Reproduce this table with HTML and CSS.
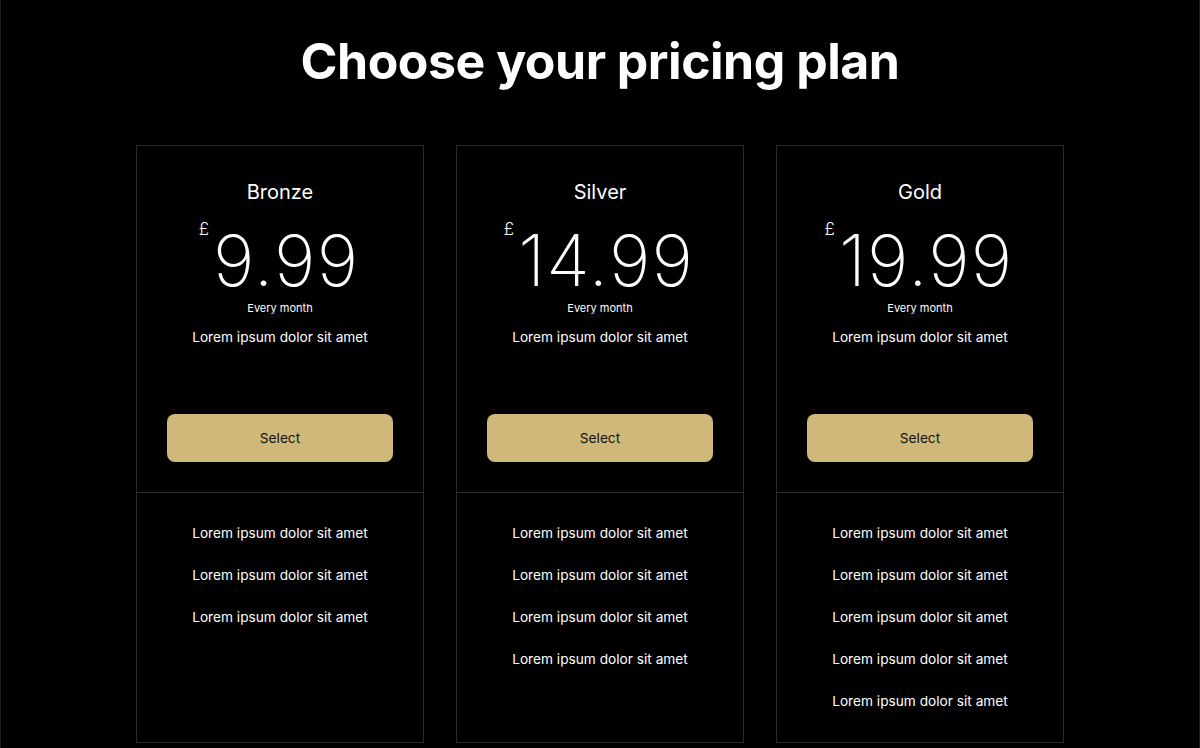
FILE: index.html
```html
<!DOCTYPE html>
<html>
<head>
<meta charset="utf-8">
<link rel="stylesheet" href="styles.css">
</head>
<body>
<main class="page">
  <h1 class="title">Choose your pricing plan</h1>
  <section class="plans">
    <article class="plan">
      <div class="plan-top">
        <h2 class="plan-name">Bronze</h2>
        <div class="price"><span class="currency">£</span><span class="amount">9.99</span></div>
        <div class="period">Every month</div>
        <p class="desc">Lorem ipsum dolor sit amet</p>
        <button class="select">Select</button>
      </div>
      <ul class="features">
        <li>Lorem ipsum dolor sit amet</li>
        <li>Lorem ipsum dolor sit amet</li>
        <li>Lorem ipsum dolor sit amet</li>
      </ul>
    </article>
    <article class="plan">
      <div class="plan-top">
        <h2 class="plan-name">Silver</h2>
        <div class="price"><span class="currency">£</span><span class="amount">14.99</span></div>
        <div class="period">Every month</div>
        <p class="desc">Lorem ipsum dolor sit amet</p>
        <button class="select">Select</button>
      </div>
      <ul class="features">
        <li>Lorem ipsum dolor sit amet</li>
        <li>Lorem ipsum dolor sit amet</li>
        <li>Lorem ipsum dolor sit amet</li>
        <li>Lorem ipsum dolor sit amet</li>
      </ul>
    </article>
    <article class="plan">
      <div class="plan-top">
        <h2 class="plan-name">Gold</h2>
        <div class="price"><span class="currency">£</span><span class="amount">19.99</span></div>
        <div class="period">Every month</div>
        <p class="desc">Lorem ipsum dolor sit amet</p>
        <button class="select">Select</button>
      </div>
      <ul class="features">
        <li>Lorem ipsum dolor sit amet</li>
        <li>Lorem ipsum dolor sit amet</li>
        <li>Lorem ipsum dolor sit amet</li>
        <li>Lorem ipsum dolor sit amet</li>
        <li>Lorem ipsum dolor sit amet</li>
      </ul>
    </article>
  </section>
</main>
</body>
</html>
```

FILE: styles.css
```css
html, body {
  margin: 0;
  padding: 0;
  background: #000;
  height: 100%;
  overflow: hidden;
}
body {
  font-family: Inter, "Noto Sans", sans-serif;
  color: #fff;
}
.page {
  height: 748px;
  border-left: 1px solid #1c1c1c;
  border-right: 1px solid #1c1c1c;
  box-sizing: border-box;
  display: flex;
  flex-direction: column;
  align-items: center;
}
.title {
  margin: 29px 0 0;
  font-size: 50px;
  font-weight: 700;
  line-height: 64px;
  letter-spacing: -0.5px;
}
.plans {
  margin-top: 52px;
  display: flex;
  gap: 32px;
}
.plan {
  width: 288px;
  height: 598px;
  box-sizing: border-box;
  border: 1px solid #2b2a22;
  display: flex;
  flex-direction: column;
}
.plan-top {
  height: 347px;
  box-sizing: border-box;
  border-bottom: 1px solid #2b2a22;
  display: flex;
  flex-direction: column;
  align-items: center;
  padding: 32px 30px 0;
}
.plan-name {
  margin: 0;
  font-size: 20px;
  font-weight: 400;
  line-height: 28px;
}
.price {
  display: flex;
  align-items: flex-start;
  margin-top: 19px;
  height: 70px;
  margin-left: -2px;
}
.currency {
  font-size: 17px;
  font-weight: 300;
  line-height: 20px;
  margin-top: -6px;
  margin-right: 4px;
}
.amount {
  font-size: 71px;
  font-weight: 200;
  line-height: 70px;
  letter-spacing: 1.2px;
}
.period {
  margin-top: 5px;
  font-size: 11px;
  line-height: 16px;
}
.desc {
  margin: 12px 0 0;
  font-size: 13.7px;
  line-height: 18px;
}
.select {
  margin-top: 68px;
  width: 100%;
  height: 48px;
  border: none;
  border-radius: 8px;
  background: #cfb87a;
  color: #141414;
  font-family: Inter, "Noto Sans", sans-serif;
  font-size: 13.7px;
}
.features {
  list-style: none;
  margin: 0;
  padding: 31px 30px 0;
  display: flex;
  flex-direction: column;
  gap: 24px;
  align-items: center;
}
.features li {
  font-size: 13.7px;
  line-height: 18px;
}
```
